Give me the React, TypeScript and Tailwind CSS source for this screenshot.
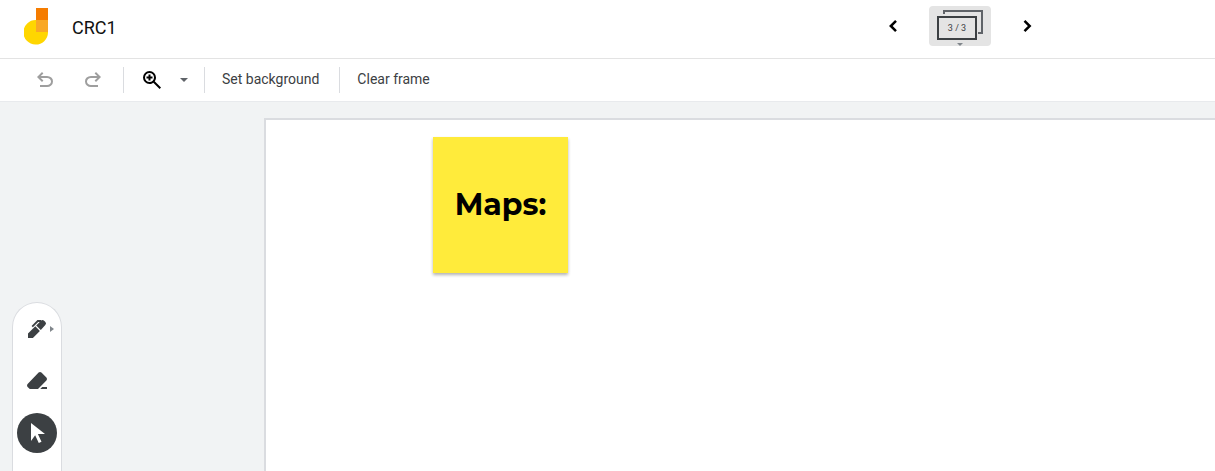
import type { ReactNode } from "react";

function IconButton({ label, children, className = "" }: { label: string; children: ReactNode; className?: string }) {
  return (
    <button type="button" aria-label={label} className={`flex shrink-0 items-center justify-center ${className}`}>
      {children}
    </button>
  );
}

function Symbol({ d, className = "" }: { d: string; className?: string }) {
  return (
    <svg viewBox="0 -960 960 960" className={`size-6 ${className}`} fill="currentColor" aria-hidden="true">
      <path d={d} />
    </svg>
  );
}

const UNDO =
  "M280-200v-80h284q63 0 109.5-40T720-420q0-60-46.5-100T564-560H312l104 104-56 56-200-200 200-200 56 56-104 104h252q97 0 169.5 63T800-420q0 94-72.5 157T564-200H280Z";
const ZOOM =
  "M784-120 532-372q-30 24-69 38t-83 14q-109 0-184.5-75.5T120-580q0-109 75.5-184.5T380-840q109 0 184.5 75.5T640-580q0 44-14 83t-38 69l252 252-56 56ZM380-400q75 0 127.5-52.5T560-580q0-75-52.5-127.5T380-760q-75 0-127.5 52.5T200-580q0 75 52.5 127.5T380-400Zm-40-60v-80h-80v-80h80v-80h80v80h80v80h-80v80h-80Z";
const ERASER =
  "M690-240h190v80H610l80-80Zm-500 80-85-85q-23-23-23.5-57t22.5-58l440-456q23-24 56.5-24t56.5 23l199 199q23 23 23 57t-23 57L520-160H190Z";
const POINTER = "M551-80 406-392 240-160v-720l560 440H516l144 309-109 51Z";

function Separator() {
  return <div className="h-[26px] w-px shrink-0 bg-[#dadce0]" />;
}

function Header() {
  return (
    <header className="flex items-start border-b border-[#e3e3e3] pl-6 pr-44">
      <div className="flex flex-1 items-start gap-6 pt-2 pb-[13px]">
        <svg viewBox="0 0 24 37" className="h-[37px] w-6 shrink-0" aria-hidden="true">
          <path d="M12 12A12.3 12.3 0 1 0 24 24.5V12Z" fill="#ffd600" />
          <path d="M12 0h12v12H12Z" fill="#f57c00" />
          <path d="M12 12h12v12H12Z" fill="#f9a825" />
        </svg>
        <h1 className="pt-2 text-lg leading-6 text-[#111111]">CRC1</h1>
      </div>
      <nav aria-label="Frames" className="flex items-center gap-6 pt-1.5">
        <IconButton label="Previous frame" className="text-black">
          <svg viewBox="0 0 24 24" className="size-6" fill="none" stroke="currentColor" strokeWidth="2.5" aria-hidden="true">
            <path d="M15 6.8 9.8 12l5.2 5.2" />
          </svg>
        </IconButton>
        <button type="button" aria-label="Frame 3 of 3" className="relative h-10 w-[62px] rounded bg-[#e4e4e4]">
          <svg viewBox="0 0 62 40" className="h-10 w-[62px]" fill="none" strokeWidth="2" aria-hidden="true">
            <path d="M15 8V5h38v22h-4" stroke="#5f6368" />
            <path d="M9 11h38v22H9Z" stroke="#3c4043" />
            <path d="M28 37h6l-3 3Z" fill="#80868b" />
          </svg>
          <span className="absolute inset-x-2 top-4 w-10 text-center text-[9px] leading-3 text-[#3c4043]">3 / 3</span>
        </button>
        <IconButton label="Next frame" className="text-black">
          <svg viewBox="0 0 24 24" className="size-6" fill="none" stroke="currentColor" strokeWidth="2.5" aria-hidden="true">
            <path d="M9.5 6.8 14.7 12l-5.2 5.2" />
          </svg>
        </IconButton>
      </nav>
    </header>
  );
}

function Toolbar() {
  return (
    <div role="toolbar" aria-label="Board tools" className="flex h-[43px] items-center border-b border-[#e8eaed] pl-[33px] text-[#3c4043]">
      <IconButton label="Undo" className="mr-6 text-[#9e9e9e]">
        <Symbol d={UNDO} />
      </IconButton>
      <IconButton label="Redo" className="mr-[18px] text-[#9e9e9e]">
        <Symbol d={UNDO} className="-scale-x-100" />
      </IconButton>
      <Separator />
      <IconButton label="Zoom in" className="ml-4 text-black">
        <Symbol d={ZOOM} />
      </IconButton>
      <IconButton label="Zoom options" className="h-6 w-10 text-[#5f6368]">
        <svg viewBox="0 0 8 4" className="h-1 w-2" fill="currentColor" aria-hidden="true">
          <path d="M0 0h8L4 4Z" />
        </svg>
      </IconButton>
      <Separator />
      <button type="button" className="pr-5 pb-0.5 pl-[17px] text-sm leading-5">Set background</button>
      <Separator />
      <button type="button" className="pr-5 pb-0.5 pl-[17px] text-sm leading-5">Clear frame</button>
    </div>
  );
}

function ToolRail() {
  return (
    <div className="flex w-[50px] flex-1 flex-col gap-3 rounded-t-[25px] border border-b-0 border-[#dadce0] bg-white px-1 pt-1.5 text-[#3c4043]">
      <IconButton label="Pen" className="relative size-10">
        <svg viewBox="0 0 24 24" className="size-6" fill="currentColor" aria-hidden="true">
          <path d="M3 16.6 10.3 9.3l4.6 4.6L7.9 20.9H3Z" />
          <path d="M11.2 8.4 16 3.7Q17.6 2.3 19.1 3.7L20.4 5Q21.7 6.5 20.3 8L15.8 12.9Z" />
          <path d="M7.2 9.6 12.8 4h3.4" fill="none" stroke="currentColor" strokeWidth="1.8" />
        </svg>
        <svg viewBox="0 0 4 6" className="absolute top-[17px] right-[3px] h-1.5 w-1" fill="#80868b" aria-hidden="true">
          <path d="M0 0v6l4-3Z" />
        </svg>
      </IconButton>
      <IconButton label="Erase" className="size-10">
        <Symbol d={ERASER} />
      </IconButton>
      <IconButton label="Select" className="size-10 rounded-full bg-[#3c4043] text-white">
        <Symbol d={POINTER} />
      </IconButton>
    </div>
  );
}

export default function App() {
  return (
    <div className="flex h-screen flex-col overflow-hidden bg-white font-['Roboto',sans-serif]">
      <Header />
      <Toolbar />
      <main className="flex flex-1 bg-[#f1f3f4]">
        <aside className="flex w-[264px] shrink-0 flex-col pt-[200px] pl-3">
          <ToolRail />
        </aside>
        <section aria-label="Frame" className="mt-4 flex-1 border-t-2 border-l-2 border-[#dadce0] bg-white pt-[17px] pl-[167px]">
          <div className="flex h-[136px] w-[135px] items-center justify-center bg-[#ffeb3b] shadow-[0_2px_3px_rgba(0,0,0,0.3)]">
            <p className="font-['Montserrat','Inter',sans-serif] text-3xl font-bold text-black">Maps:</p>
          </div>
        </section>
      </main>
    </div>
  );
}
